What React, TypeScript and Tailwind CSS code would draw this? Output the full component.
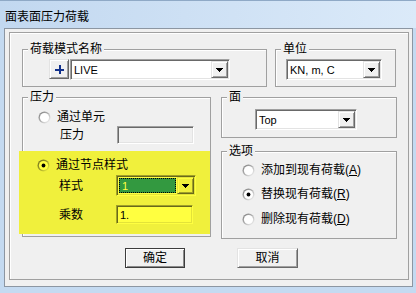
import type { ReactNode } from 'react';

// classic 3D edges; "y" variants are the same colours seen through the yellow marker
const raised = {
  n: 'border border-t-[#e3e3e3] border-l-[#e3e3e3] border-r-[#696969] border-b-[#696969] shadow-[inset_1px_1px_0_#ffffff,inset_-1px_-1px_0_#a0a0a0] bg-[#f0f0f0]',
  y: 'border border-t-[#e3e339] border-l-[#e3e339] border-r-[#69691a] border-b-[#69691a] shadow-[inset_1px_1px_0_#ffff40,inset_-1px_-1px_0_#a0a028] bg-[#f0f03c]',
};
const sunken = {
  n: 'border border-t-[#a0a0a0] border-l-[#a0a0a0] border-r-white border-b-white shadow-[inset_1px_1px_0_#696969,inset_-1px_-1px_0_#e3e3e3] p-px',
  y: 'border border-t-[#a0a028] border-l-[#a0a028] border-r-[#ffff40] border-b-[#ffff40] shadow-[inset_1px_1px_0_#69691a,inset_-1px_-1px_0_#e3e339] p-px',
};

function Arrow() {
  return (
    <svg width="7" height="4" viewBox="0 0 7 4" shapeRendering="crispEdges" fill="#000">
      <rect x="0" y="0" width="7" height="1" />
      <rect x="1" y="1" width="5" height="1" />
      <rect x="2" y="2" width="3" height="1" />
      <rect x="3" y="3" width="1" height="1" />
    </svg>
  );
}

function DropBtn({ y }: { y?: boolean }) {
  return (
    <div className={`w-[17px] h-[17px] shrink-0 flex items-center justify-center ${y ? raised.y : raised.n}`}>
      <Arrow />
    </div>
  );
}

function Combo({ text, className }: { text: string; className: string }) {
  return (
    <div className={`flex h-[21px] bg-white ${sunken.n} ${className}`}>
      <div className="flex-1 flex items-center pl-[2px] text-[11px]">{text}</div>
      <DropBtn />
    </div>
  );
}

function Radio({ checked, y }: { checked?: boolean; y?: boolean }) {
  const id = y ? 'ry' : 'rn';
  return (
    <svg width="13" height="13" viewBox="0 0 13 13" className="shrink-0">
      <defs>
        <linearGradient id={id} x1="0" y1="0" x2="1" y2="1">
          <stop offset="0" stopColor={y ? '#69691a' : '#7a7a7a'} />
          <stop offset="0.5" stopColor={y ? '#a0a028' : '#b4b4b4'} />
          <stop offset="1" stopColor={y ? '#ffff40' : '#ffffff'} />
        </linearGradient>
      </defs>
      <circle cx="6.5" cy="6.5" r="6" fill={`url(#${id})`} />
      <circle cx="6.5" cy="6.5" r="4.6" fill={y ? '#ffff40' : '#ffffff'} />
      {checked && <circle cx="6.5" cy="6.5" r="1.9" fill="#000" />}
    </svg>
  );
}

function Group({ label, className, children }: { label: string; className: string; children?: ReactNode }) {
  return (
    <div className={`border border-[#a0a0a0] shadow-[inset_1px_1px_0_#ffffff] ${className}`}>
      <div className="-mt-[7px] ml-[5px] px-[2px] w-fit h-[12px] bg-[#f0f0f0]">{label}</div>
      {children}
    </div>
  );
}

function Option({ label, k, checked, className }: { label: string; k: string; checked?: boolean; className: string }) {
  return (
    <div className={`flex items-center h-[16px] ml-[20px] gap-[6px] ${className}`}>
      <Radio checked={checked} />
      <span>
        {label}(<u>{k}</u>)
      </span>
    </div>
  );
}

export default function App() {
  return (
    <div className="w-[416px] h-[293px] bg-[#c4daf1] text-black text-[12px] leading-[12px] font-['Liberation_Sans','Noto_Sans_CJK_SC',sans-serif] overflow-hidden">
      <div className="h-[28px] pl-[5px] pt-[9px] bg-gradient-to-r from-[#c2d8f0] to-[#dbeaf9] border-t border-[#8fa9c6] font-['Noto_Sans_CJK_SC',sans-serif]">
        面表面压力荷载
      </div>

      <div className="ml-[4px] w-[409px] h-[259px] bg-[#f0f0f0] border border-[#8c96a2] pt-[3px] pl-[4px]">
        <div className="w-[400px] h-[248px] border border-[#a0a0a0] shadow-[inset_1px_1px_0_#ffffff] pl-[12px] pt-[16px]">
          {/* top row */}
          <div className="flex gap-[8px]">
            <Group label="荷载模式名称" className="w-[245px] h-[38px]">
              <div className="flex gap-[1px] ml-[26px] mt-[4px]">
                <div className={`w-[20px] h-[20px] flex items-center justify-center ${raised.n}`}>
                  <svg width="9" height="9" viewBox="0 0 9 9" shapeRendering="crispEdges" fill="#12318c">
                    <rect x="3.5" y="0" width="2" height="9" />
                    <rect x="0" y="3.5" width="9" height="2" />
                  </svg>
                </div>
                <Combo text="LIVE" className="w-[160px]" />
              </div>
            </Group>
            <Group label="单位" className="w-[121px] h-[38px]">
              <Combo text="KN, m, C" className="w-[96px] ml-[10px] mt-[4px]" />
            </Group>
          </div>

          {/* middle row */}
          <div className="flex items-start gap-[10px] mt-[10px]">
            <Group label="压力" className="w-[189px] h-[140px]">
              <div className="flex items-center h-[16px] mt-[6px] ml-[15px] gap-[6px]">
                <Radio />
                <span>通过单元</span>
              </div>
              <div className="flex items-center h-[18px] mt-[1px] ml-[37px]">
                <span className="w-[57px]">压力</span>
                <div className={`w-[77px] h-[18px] bg-[#f0f0f0] ${sunken.n}`} />
              </div>

              <div className="h-[83px] mt-[7px] -ml-[4px] bg-[#f0f03c] pt-[6px]">
                <div className="flex items-center h-[16px] ml-[18px] gap-[6px]">
                  <Radio checked y />
                  <span>通过节点样式</span>
                </div>
                <div className="flex items-center h-[21px] mt-[2px] ml-[40px]">
                  <span className="w-[57px]">样式</span>
                  <div className={`flex w-[80px] h-[21px] bg-[#ffff40] ${sunken.y}`}>
                    <div className="flex-1 py-px pl-px pr-[1px]">
                      <div className="h-full bg-[#339940] border border-dotted border-black flex items-center pl-[2px] text-[11px] text-[#ffff40]">
                        1
                      </div>
                    </div>
                    <DropBtn y />
                  </div>
                </div>
                <div className="flex items-center h-[19px] mt-[9px] ml-[40px]">
                  <span className="w-[57px]">乘数</span>
                  <div className={`w-[77px] h-[19px] bg-[#ffff40] flex items-center pl-[3px] text-[11px] ${sunken.y}`}>1.</div>
                </div>
              </div>
            </Group>

            <div className="flex flex-col">
              <Group label="面" className="w-[176px] h-[41px]">
                <Combo text="Top" className="w-[102px] ml-[33px] mt-[6px]" />
              </Group>
              <Group label="选项" className="w-[176px] h-[88px] mt-[13px]">
                <Option label="添加到现有荷载" k="A" className="mt-[5px]" />
                <Option label="替换现有荷载" k="R" checked className="mt-[8px]" />
                <Option label="删除现有荷载" k="D" className="mt-[9px]" />
              </Group>
            </div>
          </div>

          {/* buttons */}
          <div className="flex gap-[52px] mt-[9px] ml-[103px]">
            <button className="w-[60px] h-[20px] border border-[#3c3c3c] shadow-[inset_1px_1px_0_#ffffff,inset_-1px_-1px_0_#8a8a8a] bg-[#f0f0f0] flex items-center justify-center">
              确定
            </button>
            <button className={`w-[61px] h-[20px] flex items-center justify-center ${raised.n}`}>取消</button>
          </div>
        </div>
      </div>
    </div>
  );
}
